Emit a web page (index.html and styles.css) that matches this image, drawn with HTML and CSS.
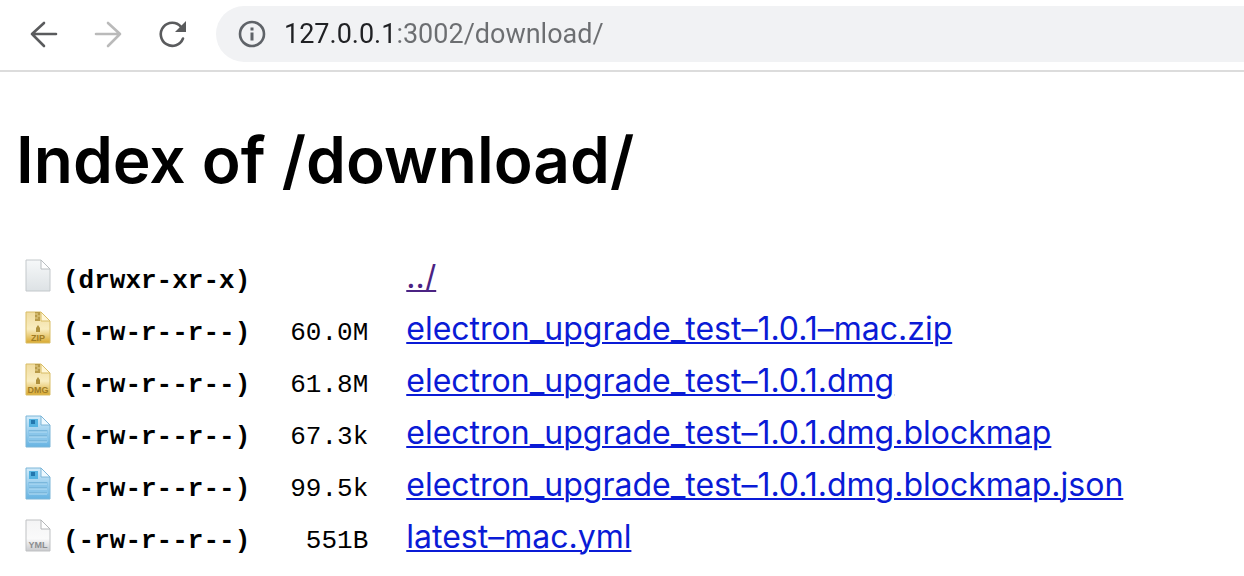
FILE: index.html
```html
<!DOCTYPE html>
<html lang="en">
<head>
    <meta charset="UTF-8">
    <meta name="viewport" content="width=device-width, initial-scale=1.0">
    <title>Index of /download/</title>
    <link rel="stylesheet" href="styles.css">
</head>
<body>
    <!-- shared file icon shapes -->
    <svg class="defs" width="0" height="0" aria-hidden="true">
        <defs>
            <linearGradient id="grey" x1="0" y1="0" x2="0" y2="1">
                <stop offset="0" stop-color="#f6f8f9"/>
                <stop offset="1" stop-color="#dde2e5"/>
            </linearGradient>
            <linearGradient id="gold" x1="0" y1="0" x2="0" y2="1">
                <stop offset="0" stop-color="#f0dca0"/>
                <stop offset="0.55" stop-color="#f9edc0"/>
                <stop offset="1" stop-color="#d9a92f"/>
            </linearGradient>
            <linearGradient id="blue" x1="0" y1="0" x2="0" y2="1">
                <stop offset="0" stop-color="#d3ecfa"/>
                <stop offset="1" stop-color="#66b3e2"/>
            </linearGradient>
            <linearGradient id="white" x1="0" y1="0" x2="0" y2="1">
                <stop offset="0" stop-color="#f4f4f5"/>
                <stop offset="0.6" stop-color="#fafafa"/>
                <stop offset="1" stop-color="#c9cacd"/>
            </linearGradient>
            <symbol id="archive" viewBox="0 0 26 34">
                <path d="M1 1h15l9 9v22H1z" fill="url(#gold)" stroke="#d9bd66"/>
                <path d="M10 1h5v9h-5z" fill="#b89a48"/>
                <path d="M10 3h3M12 5h3M10 7h3" stroke="#e9d48e"/>
                <path d="M13 14l2 3v4h-4v-4z" fill="#b0923d"/>
                <path d="M16 1v9h9z" fill="#fff6d6" stroke="#d9bd66"/>
            </symbol>
            <symbol id="document" viewBox="0 0 26 34">
                <path d="M1 1h15l9 9v22H1z" fill="url(#blue)" stroke="#7db6d8"/>
                <path d="M4 4h9v8H4z" fill="#55b4e2"/>
                <path d="M6 5h4v4H6z" fill="#2277ae"/>
                <path d="M3 15h20v12H3z" fill="#8ac6ea"/>
                <path d="M4 16h18M4 21h18M4 26h18" stroke="#6ba8cf"/>
                <path d="M4 17h18M4 22h18M4 27h18" stroke="#b5def5"/>
                <path d="M16 1v9h9z" fill="#eef9ff" stroke="#7db6d8"/>
            </symbol>
        </defs>
    </svg>

    <header class="toolbar">
        <button class="tool" aria-label="Back">
            <svg width="32" height="32" viewBox="0 0 32 32" fill="none" stroke="#5a5b5d" stroke-width="2.600" stroke-linecap="round" stroke-linejoin="round"><path d="M28 16H4M16 5L4 16l12 12"/></svg>
        </button>
        <button class="tool" aria-label="Forward" disabled>
            <svg width="32" height="32" viewBox="0 0 32 32" fill="none" stroke="#bababa" stroke-width="2.600" stroke-linecap="round" stroke-linejoin="round"><path d="M4 16h24M16 5l12 11-12 12"/></svg>
        </button>
        <button class="tool" aria-label="Reload">
            <svg width="32" height="32" viewBox="0 0 32 32"><path d="M27 20.500A11.500 11.500 0 1 1 25 8.800" fill="none" stroke="#5a5b5d" stroke-width="2.600" stroke-linecap="round"/><path d="M30 3v11H19z" fill="#5a5b5d"/></svg>
        </button>
        <div class="address">
            <svg width="28" height="28" viewBox="0 0 28 28" aria-hidden="true"><circle cx="14" cy="14" r="12" fill="none" stroke="#5f6368" stroke-width="2.600"/><path d="M12.500 7.500h3v3h-3zM12.500 12.500h3v8h-3z" fill="#5f6368"/></svg>
            <input class="url" type="text" aria-label="Address" value="127.0.0.1:3002/download/" spellcheck="false">
        </div>
    </header>

    <main class="listing">
        <h1>Index of /download/</h1>
        <table>
            <tbody>
                <tr>
                    <td class="icon"><svg width="26" height="34" viewBox="0 0 26 34"><path d="M1 1h15l9 9v22H1z" fill="url(#grey)" stroke="#c3c8cb"/><path d="M16 1v9h9z" fill="#fff" stroke="#b9bec1"/></svg></td>
                    <td class="perms"><code>(drwxr-xr-x)</code></td>
                    <td class="size"></td>
                    <td class="name"><a class="visited" href="../">../</a></td>
                </tr>
                <tr>
                    <td class="icon"><svg width="26" height="34" viewBox="0 0 26 34"><use href="#archive"/><text x="13" y="30" fill="#a07c24">ZIP</text></svg></td>
                    <td class="perms"><code>(-rw-r--r--)</code></td>
                    <td class="size"><code>60.0M</code></td>
                    <td class="name"><a href="./electron_upgrade_test-1.0.1-mac.zip">electron_upgrade_test–1.0.1–mac.zip</a></td>
                </tr>
                <tr>
                    <td class="icon"><svg width="26" height="34" viewBox="0 0 26 34"><use href="#archive"/><text x="13" y="30" fill="#a07c24">DMG</text></svg></td>
                    <td class="perms"><code>(-rw-r--r--)</code></td>
                    <td class="size"><code>61.8M</code></td>
                    <td class="name"><a href="./electron_upgrade_test-1.0.1.dmg">electron_upgrade_test–1.0.1.dmg</a></td>
                </tr>
                <tr>
                    <td class="icon"><svg width="26" height="34"><use href="#document"/></svg></td>
                    <td class="perms"><code>(-rw-r--r--)</code></td>
                    <td class="size"><code>67.3k</code></td>
                    <td class="name"><a href="./electron_upgrade_test-1.0.1.dmg.blockmap">electron_upgrade_test–1.0.1.dmg.blockmap</a></td>
                </tr>
                <tr>
                    <td class="icon"><svg width="26" height="34"><use href="#document"/></svg></td>
                    <td class="perms"><code>(-rw-r--r--)</code></td>
                    <td class="size"><code>99.5k</code></td>
                    <td class="name"><a href="./electron_upgrade_test-1.0.1.dmg.blockmap.json">electron_upgrade_test–1.0.1.dmg.blockmap.json</a></td>
                </tr>
                <tr>
                    <td class="icon"><svg width="26" height="34" viewBox="0 0 26 34"><path d="M1 1h15l9 9v22H1z" fill="url(#white)" stroke="#bfc1c3"/><path d="M16 1v9h9z" fill="#fff" stroke="#b4b6b8"/><text x="13" y="29" fill="#8b8d90">YML</text></svg></td>
                    <td class="perms"><code>(-rw-r--r--)</code></td>
                    <td class="size"><code>551B</code></td>
                    <td class="name"><a href="./latest-mac.yml">latest–mac.yml</a></td>
                </tr>
            </tbody>
        </table>
    </main>
</body>
</html>
```

FILE: styles.css
```css
*{
    box-sizing: border-box;
    padding: 0;
    margin: 0;
}
body{
    background-color: #fff;
    color: #000;
    font-family: Inter, "Liberation Sans", sans-serif;
}
.defs{
    display: block;
}
.toolbar{
    display: flex;
    align-items: center;
    gap: 32px;
    padding: 6px 0 8px 28px;
    border-bottom: 2px solid #dcdcdc;
}
.tool{
    width: 32px;
    height: 32px;
    border: none;
    background: none;
}
.tool svg{
    display: block;
}
.address{
    flex: 1;
    display: flex;
    align-items: center;
    gap: 18px;
    height: 56px;
    margin-left: -4px;
    padding-left: 22px;
    border-radius: 28px 0 0 28px;
    background-color: #f1f2f4;
}
/* host part dark, port and path grey */
.url{
    flex: 1;
    height: 40px;
    border: none;
    outline: none;
    background: linear-gradient(to right, #202124 111px, #6c6e71 111px);
    -webkit-background-clip: text;
    background-clip: text;
    -webkit-text-fill-color: transparent;
    font-family: Roboto, "Liberation Sans", sans-serif;
    font-size: 27px;
}
.listing{
    padding: 48px 16px 0;
}
h1{
    font-size: 64px;
    font-weight: 600;
    line-height: 80px;
    margin-bottom: 50px;
}
table{
    border-collapse: collapse;
}
td{
    height: 52px;
    vertical-align: middle;
    white-space: nowrap;
}
.icon{
    padding: 0 12px 0 9px;
}
.icon svg{
    display: block;
}
.icon text{
    font-family: "Liberation Sans", sans-serif;
    font-size: 9px;
    font-weight: bold;
    text-anchor: middle;
}
code{
    font-family: "Liberation Mono", monospace;
    font-size: 26px;
}
.perms code{
    font-weight: bold;
}
.perms, .size{
    padding-top: 10px;
}
.size{
    padding-left: 40px;
    text-align: right;
}
.name{
    padding-left: 38px;
    font-size: 32px;
}
a{
    color: #0a1bd6;
    text-decoration: underline;
    text-decoration-thickness: 2px;
    text-underline-offset: 2px;
}
a.visited{
    color: #4b2383;
}
```
